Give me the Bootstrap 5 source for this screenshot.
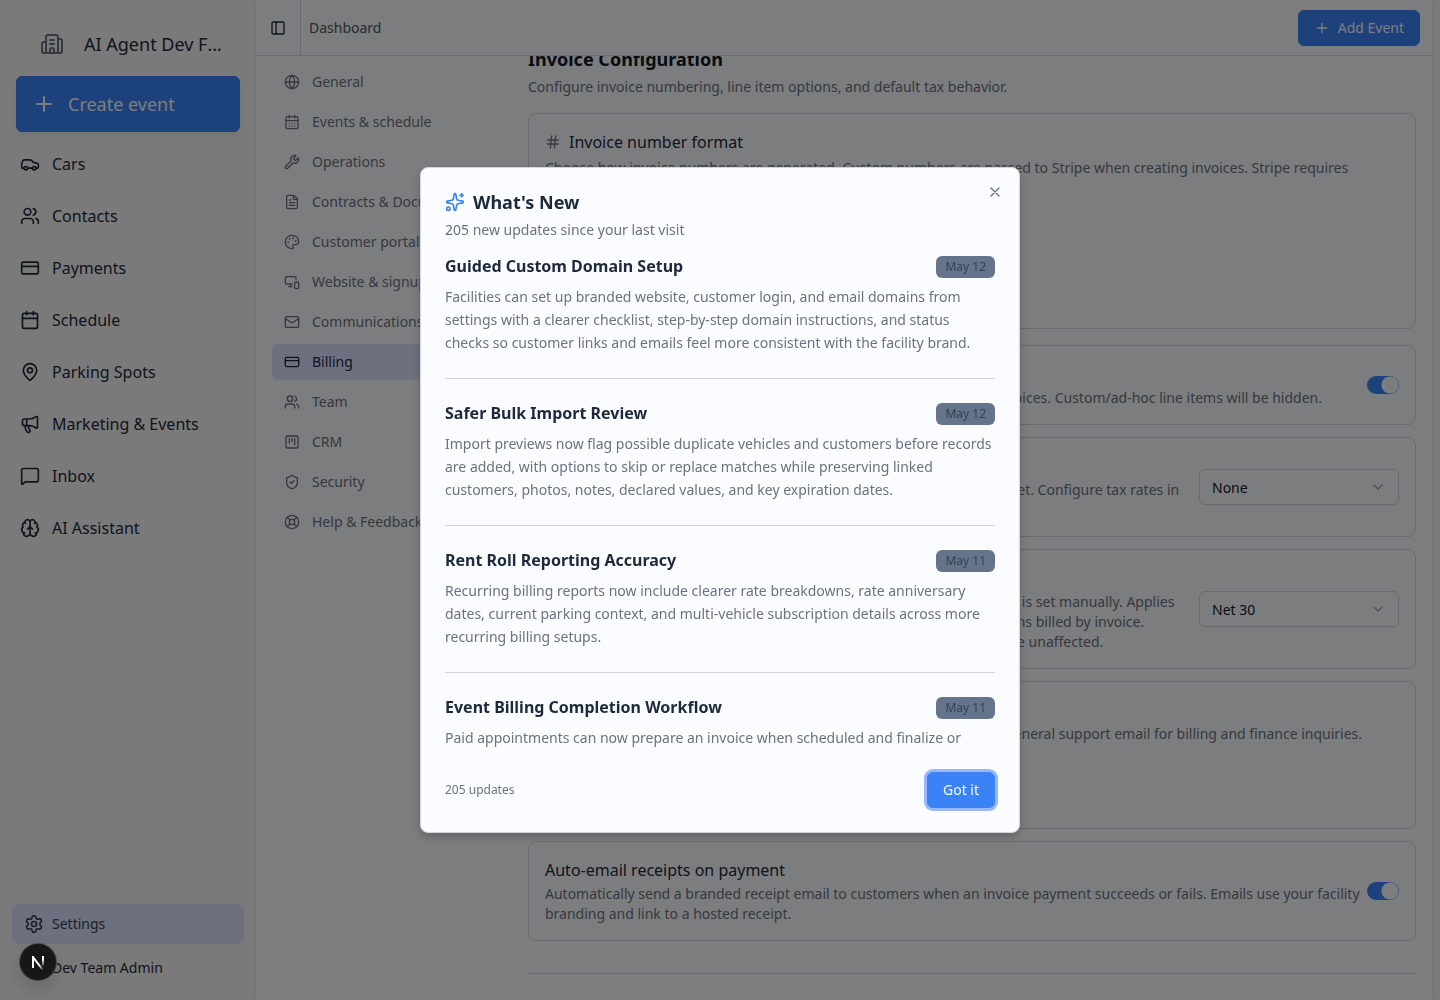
<!DOCTYPE html>
<html lang="en">
<head>
<meta charset="utf-8">
<meta name="viewport" content="width=device-width, initial-scale=1">
<title>Billing settings</title>
<link href="https://cdn.jsdelivr.net/npm/bootstrap@5.3.0/dist/css/bootstrap.min.css" rel="stylesheet">
<style>
  :root {
    --ink: #1e293b;
    --soft: #6b7280;
    --line: #d1d5db;
    --brand: #3b82f6;
    --tint: #dbe0fd;
    --panel: #f9fbfd;
  }
  body {
    font-family: "Noto Sans", sans-serif;
    font-size: 14px;
    line-height: 20px;
    color: var(--ink);
    background: #f5f5f5;
  }
  a { color: inherit; text-decoration: none; }
  .ico { width: 16px; height: 16px; flex: none; fill: none; stroke: currentColor; stroke-width: 2; stroke-linecap: round; stroke-linejoin: round; }
  .ico-20 { width: 20px; height: 20px; }
  .ico-24 { width: 24px; height: 24px; }
  .btn-brand {
    --bs-btn-color: #f9fbfd; --bs-btn-bg: var(--brand); --bs-btn-border-color: var(--brand);
    --bs-btn-hover-color: #fff; --bs-btn-hover-bg: #2563eb; --bs-btn-hover-border-color: #2563eb;
    --bs-btn-font-size: 14px; --bs-btn-line-height: 20px; --bs-btn-border-radius: 6px;
    --bs-btn-padding-x: 15px; --bs-btn-padding-y: 7px;
  }

  /* Sidebar */
  .side { width: 256px; flex: none; }
  .side-head { height: 64px; padding: 0 32px 0 40px; gap: 20px; font-size: 18px; line-height: 28px; margin-top: 12px; }
  .side-head .ico { color: var(--soft); }
  .side-create { margin: 0 16px 6px; height: 56px; --bs-btn-font-size: 18px; gap: 12px; box-shadow: 0 4px 6px rgba(0, 0, 0, .05); }
  .side-link { height: 52px; padding: 0 20px; gap: 12px; font-size: 16px; }
  .side-foot { padding: 0 12px 12px; gap: 4px; }
  .side-foot a { height: 40px; padding: 0 12px; gap: 8px; border-radius: 6px; }
  .side-foot .chosen { background: var(--tint); color: #374151; }
  .avatar { width: 20px; height: 20px; background: #cbd5e1; }

  /* Main panel */
  .panel { background: var(--panel); margin-right: 8px; box-shadow: 0 0 6px rgba(0, 0, 0, .1); min-width: 0; }
  .bar { height: 56px; border-bottom: 1px solid var(--line); padding-right: 12px; color: #4b5563; }
  .bar-toggle { width: 45px; border: 0; border-right: 1px solid var(--line); background: none; color: var(--ink); }
  .subnav { width: 240px; flex: none; padding: 8px 0 0 16px; gap: 4px; color: var(--soft); }
  .subnav a { height: 36px; padding: 0 12px; gap: 12px; border-radius: 6px; white-space: nowrap; }
  .subnav .chosen { background: var(--tint); color: var(--ink); }
  .content { padding: 0 16px 0 32px; min-width: 0; }
  .content-title { font-size: 18px; line-height: 28px; font-weight: 700; margin: -11px 0 4px; color: #111827; }
  .hint { color: var(--soft); margin: 0; }
  .box { border: 1px solid var(--line); border-radius: 8px; padding: 16px; margin-bottom: 12px; }
  .box-title { font-size: 16px; line-height: 24px; font-weight: 400; margin: 0 0 2px; color: var(--ink); }
  .box-select {
    width: 200px; height: 36px; flex: none; padding: 0 36px 0 12px; font-size: 14px; color: #111827;
    border: 1px solid var(--line); border-radius: 6px; background-color: transparent;
    background-size: 16px 16px; background-position: right 12px center; box-shadow: 0 1px 2px rgba(0, 0, 0, .05);
    --bs-form-select-bg-img: url("data:image/svg+xml,%3Csvg xmlns='http://www.w3.org/2000/svg' viewBox='0 0 24 24' fill='none' stroke='%239ca3af' stroke-width='2' stroke-linecap='round' stroke-linejoin='round'%3E%3Cpath d='m6 9 6 6 6-6'/%3E%3C/svg%3E");
  }
  .form-check-input.toggle {
    width: 32px; height: 18px; flex: none; margin: 0; float: none; border: 0; border-radius: 9px;
    background: radial-gradient(circle at 23px 9px, var(--panel) 8px, var(--brand) 9px);
  }
  .box-input { max-width: 440px; height: 36px; margin-top: 12px; font-size: 14px; }
  .box-note { margin-top: 13px; }
  .section-rule { margin: 32px 0 0; border-color: var(--line); }

  /* Update dialog */
  .modal-backdrop { --bs-backdrop-opacity: .5; }
  .news { --bs-modal-width: 600px; }
  .news .modal-content { padding: 24px; gap: 16px; border: 1px solid var(--line); border-radius: 8px; background: #fafcff; color: var(--ink); box-shadow: 0 4px 8px rgba(0, 0, 0, .2); }
  .news-title { font-size: 18px; line-height: 20px; font-weight: 700; margin: 0 0 8px; }
  .news-title .ico { color: var(--brand); }
  .news-close { position: absolute; top: 16px; right: 16px; width: 16px; height: 16px; padding: 0; border: 0; background: none; color: var(--soft); line-height: 1; display: flex; }
  .news-list { height: 50vh; overflow: hidden; }
  .news-item { padding-bottom: 24px; margin-bottom: 24px; border-bottom: 1px solid var(--line); }
  .news-name { font-size: 16px; line-height: 20px; font-weight: 700; margin: 0; }
  .news-date { height: 22px; padding: 0 9px; border-radius: 6px; background: #64748b; color: #374151; font-size: 12px; line-height: 22px; flex: none; }
  .news-text { color: var(--soft); line-height: 23px; margin: 7px 0 0; }
  .news-count { font-size: 12px; color: var(--soft); }
  .btn-ring { box-shadow: 0 0 0 3px #95b9fa; }

  .dev-badge { position: fixed; left: 20px; bottom: 20px; width: 36px; height: 36px; z-index: 1070; border: 0; border-radius: 50%; padding: 0; background: #171717; box-shadow: 0 0 0 1px #4a4a4a, 0 8px 18px rgba(0, 0, 0, .15); }
</style>
</head>
<body class="vh-100 overflow-hidden">

<svg class="d-none" xmlns="http://www.w3.org/2000/svg">
  <symbol id="building" viewBox="0 0 24 24"><path d="M10 12h4M10 8h4M14 21v-3a2 2 0 0 0-4 0v3M6 10H4a2 2 0 0 0-2 2v7a2 2 0 0 0 2 2h16a2 2 0 0 0 2-2V9a2 2 0 0 0-2-2h-2M6 21V5a2 2 0 0 1 2-2h8a2 2 0 0 1 2 2v16"/></symbol>
  <symbol id="plus" viewBox="0 0 24 24"><path d="M5 12h14M12 5v14"/></symbol>
  <symbol id="car" viewBox="0 0 24 24"><path d="M19 17h2c.6 0 1-.4 1-1v-3c0-.9-.7-1.7-1.5-1.9C18.7 10.6 16 10 16 10s-1.3-1.4-2.2-2.3c-.5-.4-1.1-.7-1.8-.7H5c-.6 0-1.1.4-1.4.9l-1.4 2.9A3.7 3.7 0 0 0 2 12v4c0 .6.4 1 1 1h2M9 17h6"/><circle cx="7" cy="17" r="2"/><circle cx="17" cy="17" r="2"/></symbol>
  <symbol id="users" viewBox="0 0 24 24"><path d="M16 21v-2a4 4 0 0 0-4-4H6a4 4 0 0 0-4 4v2M16 3.128a4 4 0 0 1 0 7.744M22 21v-2a4 4 0 0 0-3-3.87"/><circle cx="9" cy="7" r="4"/></symbol>
  <symbol id="credit" viewBox="0 0 24 24"><rect x="2" y="5" width="20" height="14" rx="2"/><path d="M2 10h20"/></symbol>
  <symbol id="calendar" viewBox="0 0 24 24"><path d="M8 2v4M16 2v4M3 10h18"/><rect x="3" y="4" width="18" height="18" rx="2"/></symbol>
  <symbol id="days" viewBox="0 0 24 24"><path d="M8 2v4M16 2v4M3 10h18M8 14h.01M12 14h.01M16 14h.01M8 18h.01M12 18h.01M16 18h.01"/><rect x="3" y="4" width="18" height="18" rx="2"/></symbol>
  <symbol id="pin" viewBox="0 0 24 24"><path d="M20 10c0 4.993-5.539 10.193-7.399 11.799a1 1 0 0 1-1.202 0C9.539 20.193 4 14.993 4 10a8 8 0 0 1 16 0"/><circle cx="12" cy="10" r="3"/></symbol>
  <symbol id="megaphone" viewBox="0 0 24 24"><path d="M11 6a13 13 0 0 0 8.4-2.8A1 1 0 0 1 21 4v12a1 1 0 0 1-1.6.8A13 13 0 0 0 11 14H5a2 2 0 0 1-2-2V8a2 2 0 0 1 2-2zM6 14a12 12 0 0 0 2.4 7.2 2 2 0 0 0 3.2-2.4A8 8 0 0 1 10 14M8 6v8"/></symbol>
  <symbol id="message" viewBox="0 0 24 24"><path d="M22 17a2 2 0 0 1-2 2H6.828a2 2 0 0 0-1.414.586l-2.202 2.202A.71.71 0 0 1 2 21.286V5a2 2 0 0 1 2-2h16a2 2 0 0 1 2 2z"/></symbol>
  <symbol id="brain" viewBox="0 0 24 24"><path d="M12 18V5M15 13a4.17 4.17 0 0 1-3-4 4.17 4.17 0 0 1-3 4M17.598 6.5A3 3 0 1 0 12 5a3 3 0 1 0-5.598 1.5M17.997 5.125a4 4 0 0 1 2.526 5.77M18 18a4 4 0 0 0 2-7.464M19.967 17.483A4 4 0 1 1 12 18a4 4 0 1 1-7.967-.517M6 18a4 4 0 0 1-2-7.464M6.003 5.125a4 4 0 0 0-2.526 5.77"/></symbol>
  <symbol id="gear" viewBox="0 0 24 24"><path d="M9.671 4.136a2.34 2.34 0 0 1 4.659 0 2.34 2.34 0 0 0 3.319 1.915 2.34 2.34 0 0 1 2.33 4.033 2.34 2.34 0 0 0 0 3.831 2.34 2.34 0 0 1-2.33 4.033 2.34 2.34 0 0 0-3.319 1.915 2.34 2.34 0 0 1-4.659 0 2.34 2.34 0 0 0-3.32-1.915 2.34 2.34 0 0 1-2.33-4.033 2.34 2.34 0 0 0 0-3.831A2.34 2.34 0 0 1 6.35 6.051a2.34 2.34 0 0 0 3.319-1.915"/><circle cx="12" cy="12" r="3"/></symbol>
  <symbol id="panel" viewBox="0 0 24 24"><rect x="3" y="3" width="18" height="18" rx="2"/><path d="M9 3v18"/></symbol>
  <symbol id="globe" viewBox="0 0 24 24"><circle cx="12" cy="12" r="10"/><path d="M12 2a14.5 14.5 0 0 0 0 20 14.5 14.5 0 0 0 0-20M2 12h20"/></symbol>
  <symbol id="wrench" viewBox="0 0 24 24"><path d="M14.7 6.3a1 1 0 0 0 0 1.4l1.6 1.6a1 1 0 0 0 1.4 0l3.106-3.105c.32-.322.863-.22.983.218a6 6 0 0 1-8.259 7.057l-7.91 7.91a1 1 0 0 1-2.999-3l7.91-7.91a6 6 0 0 1 7.057-8.259c.438.12.54.662.219.984z"/></symbol>
  <symbol id="file" viewBox="0 0 24 24"><path d="M6 22a2 2 0 0 1-2-2V4a2 2 0 0 1 2-2h8a2.4 2.4 0 0 1 1.704.706l3.588 3.588A2.4 2.4 0 0 1 20 8v12a2 2 0 0 1-2 2zM14 2v5a1 1 0 0 0 1 1h5M10 9H8M16 13H8M16 17H8"/></symbol>
  <symbol id="palette" viewBox="0 0 24 24"><path d="M12 22a1 1 0 0 1 0-20 10 9 0 0 1 10 9 5 5 0 0 1-5 5h-2.25a1.75 1.75 0 0 0-1.4 2.8l.3.4a1.75 1.75 0 0 1-1.4 2.8z"/><circle cx="13.5" cy="6.5" r=".5"/><circle cx="17.5" cy="10.5" r=".5"/><circle cx="6.5" cy="12.5" r=".5"/><circle cx="8.5" cy="7.5" r=".5"/></symbol>
  <symbol id="devices" viewBox="0 0 24 24"><path d="M18 8V6a2 2 0 0 0-2-2H4a2 2 0 0 0-2 2v7a2 2 0 0 0 2 2h8M10 19v-4M7 19h5"/><rect x="16" y="12" width="6" height="10" rx="2"/></symbol>
  <symbol id="mail" viewBox="0 0 24 24"><path d="m22 7-8.991 5.727a2 2 0 0 1-2.009 0L2 7"/><rect x="2" y="4" width="20" height="16" rx="2"/></symbol>
  <symbol id="kanban" viewBox="0 0 24 24"><rect x="3" y="3" width="18" height="18" rx="2"/><path d="M8 7v7M12 7v4M16 7v9"/></symbol>
  <symbol id="shield" viewBox="0 0 24 24"><path d="M20 13c0 5-3.5 7.5-7.66 8.95a1 1 0 0 1-.67-.01C7.5 20.5 4 18 4 13V6a1 1 0 0 1 1-1c2 0 4.5-1.2 6.24-2.72a1.17 1.17 0 0 1 1.52 0C14.51 3.81 17 5 19 5a1 1 0 0 1 1 1zM9 12l2 2 4-4"/></symbol>
  <symbol id="buoy" viewBox="0 0 24 24"><circle cx="12" cy="12" r="10"/><circle cx="12" cy="12" r="4"/><path d="m4.93 4.93 4.24 4.24M14.83 9.17l4.24-4.24M14.83 14.83l4.24 4.24M9.17 14.83l-4.24 4.24"/></symbol>
  <symbol id="hash" viewBox="0 0 24 24"><path d="M4 9h16M4 15h16M10 3 8 21M16 3l-2 18"/></symbol>
  <symbol id="sparkles" viewBox="0 0 24 24"><path d="M11.017 2.814a1 1 0 0 1 1.966 0l1.051 5.558a2 2 0 0 0 1.594 1.594l5.558 1.051a1 1 0 0 1 0 1.966l-5.558 1.051a2 2 0 0 0-1.594 1.594l-1.051 5.558a1 1 0 0 1-1.966 0l-1.051-5.558a2 2 0 0 0-1.594-1.594l-5.558-1.051a1 1 0 0 1 0-1.966l5.558-1.051a2 2 0 0 0 1.594-1.594zM20 2v4M22 4h-4"/><circle cx="4" cy="20" r="2"/></symbol>
  <symbol id="cross" viewBox="0 0 24 24"><path d="M18 6 6 18M6 6l12 12"/></symbol>
</svg>

<div class="d-flex h-100">
  <aside class="side d-flex flex-column">
    <div class="side-head d-flex align-items-center">
      <svg class="ico ico-24"><use href="#building"/></svg>
      <span class="text-truncate">AI Agent Dev Facility</span>
    </div>
    <button type="button" class="side-create btn btn-brand d-flex align-items-center"><svg class="ico ico-24"><use href="#plus"/></svg>Create event</button>
    <nav class="d-flex flex-column" aria-label="Main">
      <a href="#" class="side-link d-flex align-items-center"><svg class="ico ico-20"><use href="#car"/></svg>Cars</a>
      <a href="#" class="side-link d-flex align-items-center"><svg class="ico ico-20"><use href="#users"/></svg>Contacts</a>
      <a href="#" class="side-link d-flex align-items-center"><svg class="ico ico-20"><use href="#credit"/></svg>Payments</a>
      <a href="#" class="side-link d-flex align-items-center"><svg class="ico ico-20"><use href="#calendar"/></svg>Schedule</a>
      <a href="#" class="side-link d-flex align-items-center"><svg class="ico ico-20"><use href="#pin"/></svg>Parking Spots</a>
      <a href="#" class="side-link d-flex align-items-center"><svg class="ico ico-20"><use href="#megaphone"/></svg>Marketing &amp; Events</a>
      <a href="#" class="side-link d-flex align-items-center"><svg class="ico ico-20"><use href="#message"/></svg>Inbox</a>
      <a href="#" class="side-link d-flex align-items-center"><svg class="ico ico-20"><use href="#brain"/></svg>AI Assistant</a>
    </nav>
    <div class="side-foot d-flex flex-column mt-auto">
      <a href="#" class="chosen d-flex align-items-center"><svg class="ico ico-20"><use href="#gear"/></svg>Settings</a>
      <a href="#" class="d-flex align-items-center"><span class="avatar rounded-circle"></span>Dev Team Admin</a>
    </div>
  </aside>

  <div class="panel d-flex flex-column flex-grow-1">
    <header class="bar d-flex align-items-center flex-shrink-0">
      <button type="button" class="bar-toggle h-100 p-0 d-flex align-items-center justify-content-center" aria-label="Toggle sidebar"><svg class="ico"><use href="#panel"/></svg></button>
      <span class="ms-2">Dashboard</span>
      <button type="button" class="btn btn-brand d-flex align-items-center gap-2 ms-auto"><svg class="ico"><use href="#plus"/></svg>Add Event</button>
    </header>

    <div class="d-flex flex-grow-1 overflow-hidden">
      <nav class="subnav d-flex flex-column" aria-label="Settings">
        <a href="#" class="d-flex align-items-center"><svg class="ico"><use href="#globe"/></svg>General</a>
        <a href="#" class="d-flex align-items-center"><svg class="ico"><use href="#days"/></svg>Events &amp; schedule</a>
        <a href="#" class="d-flex align-items-center"><svg class="ico"><use href="#wrench"/></svg>Operations</a>
        <a href="#" class="d-flex align-items-center"><svg class="ico"><use href="#file"/></svg>Contracts &amp; Documents</a>
        <a href="#" class="d-flex align-items-center"><svg class="ico"><use href="#palette"/></svg>Customer portal</a>
        <a href="#" class="d-flex align-items-center"><svg class="ico"><use href="#devices"/></svg>Website &amp; signup</a>
        <a href="#" class="d-flex align-items-center"><svg class="ico"><use href="#mail"/></svg>Communications</a>
        <a href="#" class="chosen d-flex align-items-center"><svg class="ico"><use href="#credit"/></svg>Billing</a>
        <a href="#" class="d-flex align-items-center"><svg class="ico"><use href="#users"/></svg>Team</a>
        <a href="#" class="d-flex align-items-center"><svg class="ico"><use href="#kanban"/></svg>CRM</a>
        <a href="#" class="d-flex align-items-center"><svg class="ico"><use href="#shield"/></svg>Security</a>
        <a href="#" class="d-flex align-items-center"><svg class="ico"><use href="#buoy"/></svg>Help &amp; Feedback</a>
      </nav>

      <main class="content flex-grow-1">
        <h2 class="content-title">Invoice Configuration</h2>
        <p class="hint mb-3">Configure invoice numbering, line item options, and default tax behavior.</p>

        <section class="box mb-3">
          <div class="d-flex align-items-center gap-2 mb-1"><svg class="ico text-secondary"><use href="#hash"/></svg><h3 class="box-title m-0">Invoice number format</h3></div>
          <p class="hint">Choose how invoice numbers are generated. Custom numbers are passed to Stripe when creating invoices. Stripe requires alphanumeric invoice numbers.</p>
          <input type="text" class="box-input form-control" aria-label="Invoice prefix" value="INV-">
          <p class="hint box-note">Next invoice number</p>
          <p class="hint box-note">INV-0001</p>
        </section>

        <section class="box d-flex align-items-center justify-content-between">
          <div>
            <h3 class="box-title">Predefined line items only</h3>
            <label class="hint" for="only-items">When enabled, only predefined line items may be added to any new invoices. Custom/ad-hoc line items will be hidden.</label>
          </div>
          <input class="form-check-input toggle" type="checkbox" role="switch" id="only-items" checked>
        </section>

        <section class="box d-flex align-items-center gap-3">
          <div class="flex-grow-1">
            <h3 class="box-title">Default tax rate</h3>
            <label class="hint" for="tax">Applied to new customer invoice line items when no specific tax rate is set. Configure tax rates in your Stripe settings.</label>
          </div>
          <select class="form-select box-select" id="tax"><option>None</option></select>
        </section>

        <section class="box d-flex align-items-center gap-3">
          <div class="flex-grow-1">
            <h3 class="box-title">Default payment terms</h3>
            <label class="hint" for="terms">Number of days until any invoice is automatically due when no due date is set manually. Applies<br>to one-time invoices as well as to new and existing recurring subscriptions billed by invoice.<br>Customers with automatic card payments enabled on any agreement are unaffected.</label>
          </div>
          <select class="form-select box-select" id="terms"><option>Net 30</option></select>
        </section>

        <section class="box">
          <h3 class="box-title">Billing contact email</h3>
          <label class="hint d-block" for="mailbox">Shown on invoices and receipts. Leave blank to use your facility's own general support email for billing and finance inquiries.</label>
          <input type="email" class="box-input form-control" id="mailbox">
          <p class="hint">Visible to customers</p>
        </section>

        <section class="box d-flex align-items-center mb-0">
          <div>
            <h3 class="box-title">Auto-email receipts on payment</h3>
            <label class="hint" for="receipts">Automatically send a branded receipt email to customers when an invoice payment succeeds or fails. Emails use your facility branding and link to a hosted receipt.</label>
          </div>
          <input class="form-check-input toggle" type="checkbox" role="switch" id="receipts" checked>
        </section>
        <hr class="section-rule opacity-100">
      </main>
    </div>
  </div>
</div>

<div class="modal-backdrop show"></div>
<div class="modal d-block news" tabindex="-1" role="dialog" aria-modal="true" aria-labelledby="news-heading">
  <div class="modal-dialog modal-dialog-centered">
    <div class="modal-content">
      <div>
        <h1 class="news-title d-flex align-items-center gap-2" id="news-heading"><svg class="ico ico-20"><use href="#sparkles"/></svg>What's New</h1>
        <p class="hint">205 new updates since your last visit</p>
      </div>
      <div class="news-list">
        <article class="news-item">
          <div class="d-flex justify-content-between"><h2 class="news-name">Guided Custom Domain Setup</h2><span class="news-date">May 12</span></div>
          <p class="news-text">Facilities can set up branded website, customer login, and email domains from settings with a clearer checklist, step-by-step domain instructions, and status checks so customer links and emails feel more consistent with the facility brand.</p>
        </article>
        <article class="news-item">
          <div class="d-flex justify-content-between"><h2 class="news-name">Safer Bulk Import Review</h2><span class="news-date">May 12</span></div>
          <p class="news-text">Import previews now flag possible duplicate vehicles and customers before records are added, with options to skip or replace matches while preserving linked customers, photos, notes, declared values, and key expiration dates.</p>
        </article>
        <article class="news-item">
          <div class="d-flex justify-content-between"><h2 class="news-name">Rent Roll Reporting Accuracy</h2><span class="news-date">May 11</span></div>
          <p class="news-text">Recurring billing reports now include clearer rate breakdowns, rate anniversary dates, current parking context, and multi-vehicle subscription details across more recurring billing setups.</p>
        </article>
        <article class="news-item">
          <div class="d-flex justify-content-between"><h2 class="news-name">Event Billing Completion Workflow</h2><span class="news-date">May 11</span></div>
          <p class="news-text">Paid appointments can now prepare an invoice when scheduled and finalize or</p>
        </article>
      </div>
      <div class="d-flex align-items-center justify-content-between">
        <span class="news-count">205 updates</span>
        <button type="button" class="btn btn-brand btn-ring">Got it</button>
      </div>
      <button type="button" class="news-close" aria-label="Close"><svg class="ico"><use href="#cross"/></svg></button>
    </div>
  </div>
</div>

<button type="button" class="dev-badge" aria-label="Open developer tools">
  <svg width="36" height="36" viewBox="0 0 36 36" fill="none" stroke-width="2">
    <defs>
      <linearGradient id="fade-a" gradientUnits="userSpaceOnUse" x1="13" y1="13" x2="24" y2="26"><stop offset=".6" stop-color="#fff"/><stop offset="1" stop-color="#fff" stop-opacity="0"/></linearGradient>
      <linearGradient id="fade-b" gradientUnits="userSpaceOnUse" x1="23" y1="12" x2="23" y2="23"><stop offset=".3" stop-color="#fff"/><stop offset="1" stop-color="#fff" stop-opacity="0"/></linearGradient>
    </defs>
    <line x1="13" y1="12" x2="13" y2="24" stroke="#fff"/>
    <line x1="12.6" y1="12.6" x2="22.5" y2="25.5" stroke="url(#fade-a)"/>
    <rect x="22" y="12" width="2" height="10" fill="url(#fade-b)"/>
  </svg>
</button>

<script src="https://cdn.jsdelivr.net/npm/bootstrap@5.3.0/dist/js/bootstrap.bundle.min.js"></script>
</body>
</html>
